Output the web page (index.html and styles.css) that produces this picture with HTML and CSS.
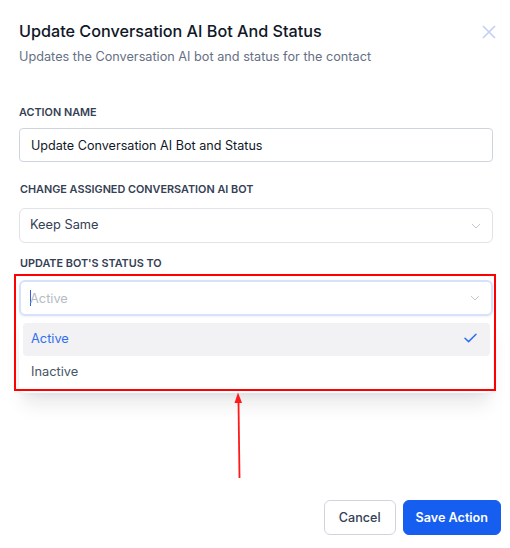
FILE: index.html
```html
<!DOCTYPE html>
<html lang="en">
  <head>
    <meta charset="UTF-8" />
    <meta name="viewport" content="width=device-width, initial-scale=1.0" />
    <title>Update Conversation AI Bot And Status</title>
    <link rel="stylesheet" href="styles.css">
  </head>
  <body>
    <div class="modal">
      <div class="modal-header">
        <div>
          <h2 class="modal-title">Update Conversation AI Bot And Status</h2>
          <p class="modal-sub">Updates the Conversation AI bot and status for the contact</p>
        </div>
        <button class="close-btn" aria-label="Close">
          <svg width="14" height="14" viewBox="0 0 14 14">
            <path d="M1 1 L13 13 M13 1 L1 13" stroke="#c3cdf5" stroke-width="1.6" fill="none" />
          </svg>
        </button>
      </div>

      <div class="modal-body">
        <div class="field">
          <label class="field-label">Action Name</label>
          <div class="text-input">Update Conversation AI Bot and Status</div>
        </div>

        <div class="field">
          <label class="field-label label-select">Change Assigned Conversation AI Bot</label>
          <div class="select">
            <span class="select-value">Keep Same</span>
            <svg class="chevron" width="10" height="6" viewBox="0 0 10 6">
              <path d="M1 1 L5 5 L9 1" stroke="#c4c8d0" stroke-width="1" fill="none" />
            </svg>
          </div>
        </div>

        <div class="field status-field">
          <label class="field-label label-status">Update Bot's Status To</label>
          <div class="select is-focused">
            <span class="caret"></span>
            <span class="select-placeholder">Active</span>
            <svg class="chevron" width="10" height="6" viewBox="0 0 10 6">
              <path d="M1 1 L5 5 L9 1" stroke="#c4c8d0" stroke-width="1" fill="none" />
            </svg>
          </div>
          <div class="dropdown">
            <div class="option is-selected">
              <span>Active</span>
              <svg width="13" height="10" viewBox="0 0 13 10">
                <path d="M1 5.2 L4.6 8.6 L12 1.2" stroke="#2f6fed" stroke-width="1.5" fill="none" stroke-linecap="round" stroke-linejoin="round" />
              </svg>
            </div>
            <div class="option">
              <span>Inactive</span>
            </div>
          </div>
        </div>
      </div>

      <div class="modal-footer">
        <button class="btn btn-secondary">Cancel</button>
        <button class="btn btn-primary">Save Action</button>
      </div>
    </div>

    <!-- annotation overlay -->
    <div class="note-box"></div>
    <svg class="note-arrow" width="12" height="90" viewBox="0 0 12 90">
      <path d="M5.5 10 L6.5 86" stroke="#ff1a1a" stroke-width="1.8" fill="none" />
      <path d="M5 0.5 L1.5 11 L9 11 Z" fill="#ff1a1a" />
    </svg>
  </body>
</html>
```

FILE: styles.css
```css
* {
  box-sizing: border-box;
}

body {
  margin: 0;
  background: #ffffff;
  font-family: Inter, "Noto Sans", sans-serif;
  color: #101828;
}

.modal {
  position: relative;
  width: 510px;
  min-height: 548px;
  display: flex;
  flex-direction: column;
  padding: 19px 9px 13px 19px;
}

.modal-header {
  display: flex;
  justify-content: space-between;
  align-items: flex-start;
}

.modal-title {
  margin: 0;
  font-size: 16.2px;
  line-height: 24px;
  font-weight: 500;
  color: #101828;
}

.modal-sub {
  margin: 4px 0 0;
  font-size: 12.7px;
  line-height: 20px;
  color: #667085;
}

.close-btn {
  margin: 6px 5px 0 0;
  padding: 0;
  border: none;
  background: none;
  line-height: 0;
}

.modal-body {
  padding-top: 37px;
  padding-right: 8px;
}

.field {
  margin-bottom: 19px;
}

.field-label {
  display: block;
  font-size: 10.85px;
  line-height: 16px;
  font-weight: 600;
  text-transform: uppercase;
  color: #344054;
  margin-bottom: 8px;
}

.label-select {
  padding-left: 1px;
  margin-bottom: 11px;
}

.label-status {
  padding-left: 1px;
  margin-bottom: 9px;
}

.text-input {
  height: 34px;
  border: 1px solid #d0d5dd;
  border-radius: 4px;
  padding: 0 11px;
  display: flex;
  align-items: center;
  font-size: 12.6px;
  color: #101828;
}

.select {
  height: 35px;
  border: 1px solid #e0e3e8;
  border-radius: 6px;
  padding: 0 11px 0 10px;
  display: flex;
  align-items: center;
  font-size: 12.8px;
  color: #344054;
}

.select-value {
  flex: 1;
  margin-top: -2px;
}

.chevron {
  flex-shrink: 0;
}

.status-field {
  position: relative;
  margin-top: -7px;
}

.select.is-focused {
  height: 36px;
  border: 2px solid #d6e1fb;
  box-shadow: 0 1px 3px rgba(16, 24, 40, 0.06);
  padding-left: 9px;
}

.caret {
  width: 1px;
  height: 16px;
  background: #2f5fe0;
  margin-right: -1px;
}

.select-placeholder {
  flex: 1;
  color: #b6bbc4;
}

.dropdown {
  position: absolute;
  left: 0;
  right: 0;
  top: 63px;
  background: #ffffff;
  border-radius: 6px;
  padding: 5px 3px 4px 4px;
  box-shadow: 0 14px 20px -4px rgba(16, 24, 40, 0.1), 0 4px 8px -2px rgba(16, 24, 40, 0.05);
}

.option {
  height: 33px;
  display: flex;
  align-items: center;
  justify-content: space-between;
  padding: 0 13px 3px 8px;
  border-radius: 4px;
  font-size: 12.8px;
  color: #475467;
}

.option.is-selected {
  background: #f2f2f5;
  color: #2f6fed;
}

.modal-footer {
  margin-top: auto;
  display: flex;
  justify-content: flex-end;
  gap: 7px;
}

.btn {
  height: 35px;
  padding: 0 14px;
  border-radius: 6px;
  font-family: Inter, "Noto Sans", sans-serif;
  font-size: 12.6px;
  cursor: pointer;
}

.btn-secondary {
  background: #ffffff;
  border: 1px solid #d0d5dd;
  color: #344054;
  font-weight: 500;
}

.btn-primary {
  background: #155eef;
  border: 1px solid #155eef;
  color: #ffffff;
  font-weight: 600;
  padding: 0 12px;
}

.note-box {
  position: absolute;
  left: 14px;
  top: 274px;
  width: 482px;
  height: 117px;
  border: 2px solid #ff0000;
}

.note-arrow {
  position: absolute;
  left: 233px;
  top: 392px;
}
```
